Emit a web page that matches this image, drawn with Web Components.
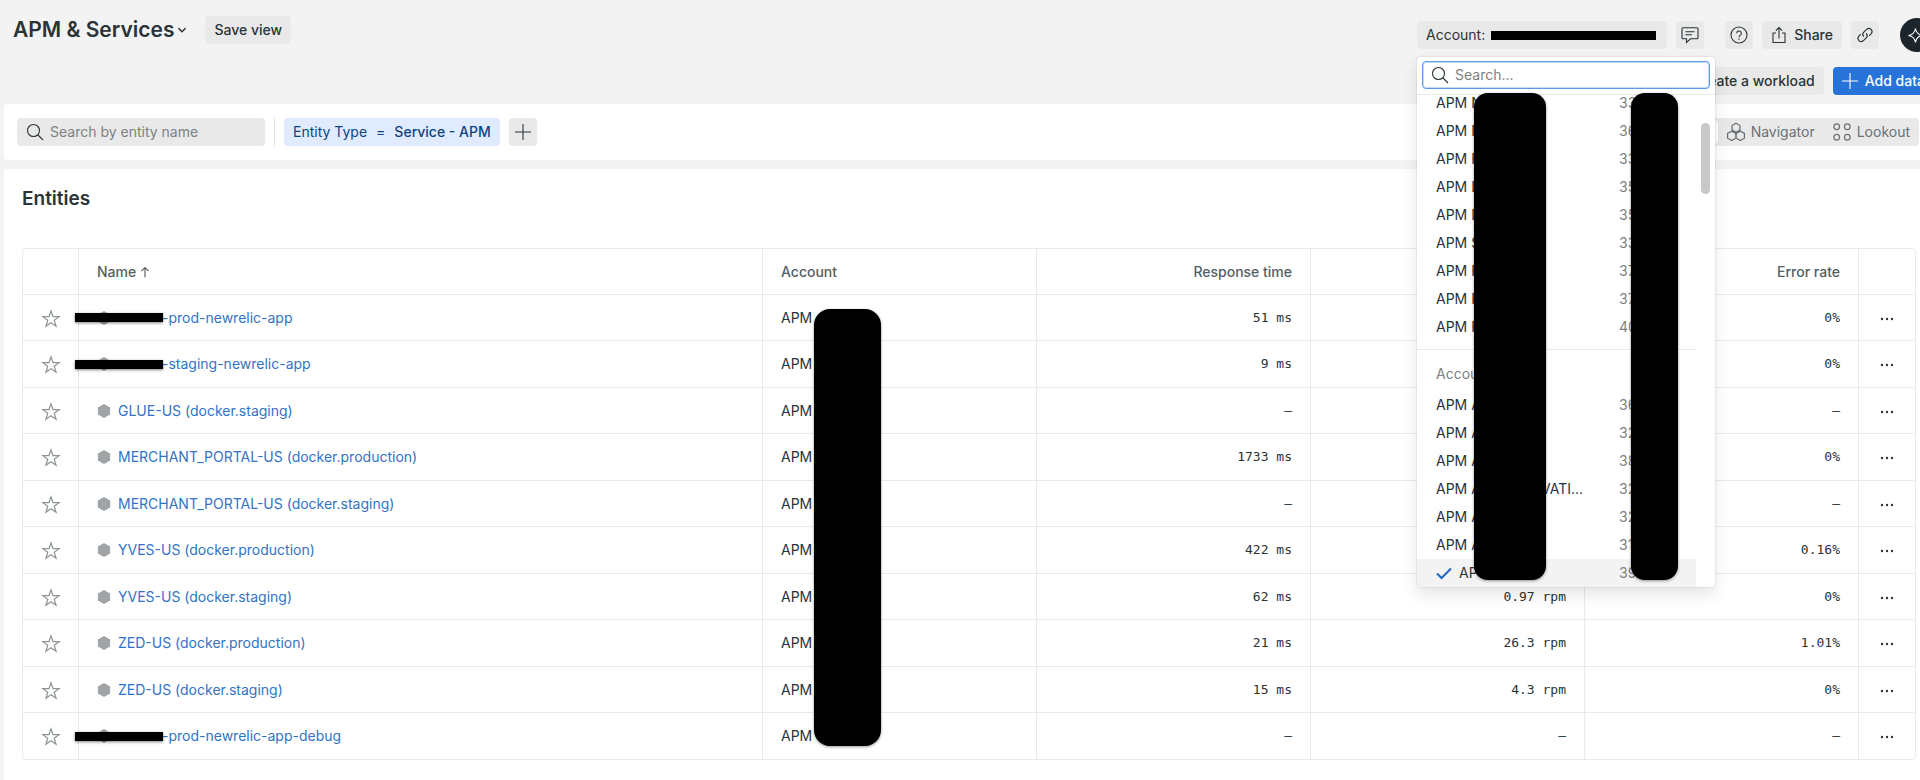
<!DOCTYPE html>
<html lang="en">
<head>
<meta charset="utf-8">
<meta name="viewport" content="width=device-width, initial-scale=1">
<title>APM &amp; Services</title>
<style>
    :root {
        --page-background: #f3f3f3;
        --control-background: #e9e9e9;
        --border-color: #e9eaea;
        --text-color: #293338;
        --muted-color: #6b7175;
        --link-color: #3273c5;
        --primary-color: #2873da;
    }
    * { box-sizing: border-box; }
    body {
        margin: 0;
        background: var(--page-background);
        color: var(--text-color);
        font: 14px/20px Inter, "Liberation Sans", sans-serif;
        overflow-x: hidden;
    }
</style>
</head>
<body>
<apm-app></apm-app>

<script>
const icons = {
    search: '<circle cx="6.5" cy="6.5" r="6"/><path d="M11 11l5 5"/>',
    plus: '<path d="M8 0v16M0 8h16"/>',
    chevron: '<path d="M4.5 6.2L8 9.8l3.5-3.6" stroke-width="1.4"/>',
    comment: '<path d="M1 0.8h14a1 1 0 0 1 1 1v9a1 1 0 0 1-1 1H8.5L4.5 15.5v-3.700h-3.500a1 1 0 0 1-1-1v-9a1 1 0 0 1 1-1z"/><path d="M3.500 4.700h9M3.500 7.700h6.500"/>',
    help: '<circle cx="8" cy="8" r="8"/><path d="M5.700 6.300a2.300 2.300 0 1 1 3.700 1.800C8.400 8.800 8 9.200 8 10.200"/><path d="M8 11.500v1.300" stroke-width="1.300"/>',
    share: '<path d="M5 6H2v9.500h12V6h-3M8 11.500V0.500M4.800 3.700L8 0.500l3.200 3.200"/>',
    link: '<path d="M6.800 9.700a3.200 3.200 0 0 1 0-4.500l3-3a3.200 3.200 0 0 1 4.500 4.500l-2.100 2.100"/><path d="M9.200 6.300a3.200 3.200 0 0 1 0 4.500l-3 3a3.200 3.200 0 0 1-4.500-4.500l2.100-2.100"/>',
    sparkle: '<path d="M6.500 1.500Q7.500 7.500 13.500 8.500 7.500 9.500 6.500 15.500 5.500 9.500 -0.500 8.500 5.500 7.500 6.500 1.500z"/><path d="M13 1v4M11 3h4"/>',
    list: '<path d="M1 3h14M1 8h14M1 13h14"/>',
    navigator: '<path d="M8 0.300l3.500 2v4L8 8.300 4.500 6.300v-4zM4.200 7.200l3.600 2v4.300l-3.600 2-3.700-2V9.200zM11.800 7.200l3.700 2v4.300l-3.700 2-3.600-2V9.200z"/>',
    lookout: '<circle cx="3.300" cy="3.300" r="2.500"/><circle cx="12.700" cy="3.300" r="2.500"/><circle cx="3.300" cy="12.700" r="2.500"/><circle cx="12.700" cy="12.700" r="2.500"/>',
    star: '<path d="M8 0.800l1.800 5.100h5.400l-4.300 3.300 1.600 5.300L8 11.300l-4.500 3.200 1.600-5.300L0.800 5.900h5.400z"/>',
    more: '<g fill="currentColor" stroke="none"><circle cx="3" cy="8" r="1.200"/><circle cx="8" cy="8" r="1.200"/><circle cx="13" cy="8" r="1.200"/></g>',
    check: '<path d="M1 8.500l4.500 4.500L15 3.500" stroke-width="2"/>',
    arrow: '<path d="M8 14V3M4 7l4-4 4 4" stroke-width="1.300"/>',
    hexagon: '<path d="M8 0l7 4v8l-7 4-7-4V4z" fill="currentColor" stroke="none"/>',
};

class NrIcon extends HTMLElement {
    constructor() {
        super();
        this.attachShadow({ mode: 'open' });
    }

    connectedCallback() {
        this.shadowRoot.innerHTML = `
            <style>
                :host {
                    display: inline-flex;
                    flex: none;
                    width: 16px;
                    height: 16px;
                }
                svg {
                    width: 100%;
                    height: 100%;
                    overflow: visible;
                }
            </style>
            <svg viewBox="0 0 16 16" fill="none" stroke="currentColor" stroke-width="1.1" aria-hidden="true">${icons[this.getAttribute('name')]}</svg>
        `;
    }
}

class NrButton extends HTMLElement {
    constructor() {
        super();
        this.attachShadow({ mode: 'open' });
    }

    connectedCallback() {
        const icon = this.getAttribute('icon');
        const label = this.getAttribute('label');

        this.shadowRoot.innerHTML = `
            <style>
                :host {
                    display: inline-flex;
                    flex: none;
                }
                button {
                    display: flex;
                    align-items: center;
                    justify-content: center;
                    gap: 7px;
                    height: 28px;
                    min-width: 28px;
                    padding: 0 9px;
                    border: 0;
                    border-radius: 4px;
                    background: var(--control-background);
                    color: var(--text-color);
                    font: inherit;
                    font-weight: 500;
                    white-space: nowrap;
                }
                :host([label]) button { padding: 0 6px; }
                :host([variant="primary"]) button {
                    background: var(--primary-color);
                    color: #fff;
                }
                :host([variant="tab"]) button {
                    gap: 6px;
                    background: transparent;
                    color: var(--muted-color);
                    font-weight: 400;
                }
                :host([variant="tab"]) nr-icon {
                    width: 18px;
                    height: 18px;
                }
                :host([variant="round"]) button {
                    width: 34px;
                    height: 34px;
                    border-radius: 50%;
                    background: #1d252c;
                    color: #fff;
                }
                :host([selected]) button {
                    height: 24px;
                    background: #fff;
                    color: var(--text-color);
                }
            </style>
            <button type="button" ${label ? `aria-label="${label}"` : ''}>
                ${icon ? `<nr-icon name="${icon}"></nr-icon>` : ''}
                <slot></slot>
            </button>
        `;
        if (label) this.shadowRoot.querySelector('slot').remove();
    }
}

class SearchField extends HTMLElement {
    constructor() {
        super();
        this.attachShadow({ mode: 'open' });
    }

    connectedCallback() {
        const placeholder = this.getAttribute('placeholder');

        this.shadowRoot.innerHTML = `
            <style>
                :host {
                    display: flex;
                    align-items: center;
                    gap: 7px;
                    height: 28px;
                    padding: 0 10px;
                    border-radius: 4px;
                    background: var(--control-background);
                    box-sizing: border-box;
                }
                :host([outlined]) {
                    padding: 0 9px;
                    background: #fff;
                    border: 1px solid #5a9be6;
                    box-shadow: inset 0 0 0 1px #c4dcf8;
                }
                input {
                    flex: 1;
                    min-width: 0;
                    padding: 0;
                    border: 0;
                    outline: 0;
                    background: transparent;
                    color: inherit;
                    font: inherit;
                }
                input::placeholder { color: #7c8184; opacity: 1; }
            </style>
            <nr-icon name="search"></nr-icon>
            <input type="text" aria-label="${placeholder}" placeholder="${placeholder}">
        `;
    }
}

// Account names and ids are masked, only their first characters are listed
const recentAccounts = [
    ['APM N', '33'], ['APM N', '36'], ['APM P', '33'], ['APM L', '35'], ['APM D', '35'],
    ['APM S', '33'], ['APM P', '37'], ['APM P', '37'], ['APM P', '40'],
];
const allAccounts = [
    ['APM A', '36'], ['APM A', '32'], ['APM A', '38'], ['APM A', '32', 'VATI...'],
    ['APM A', '32'], ['APM A', '31'],
];

class AccountPicker extends HTMLElement {
    constructor() {
        super();
        this.attachShadow({ mode: 'open' });
    }

    connectedCallback() {
        const item = ([name, id, tail]) => `
            <li><span class="name">${name}</span><span class="tail">${tail || ''}</span><span class="id">${id}</span></li>`;

        this.shadowRoot.innerHTML = `
            <style>
                * { box-sizing: border-box; }
                :host {
                    display: block;
                    position: relative;
                }
                .trigger {
                    display: flex;
                    align-items: center;
                    gap: 6px;
                    height: 28px;
                    padding: 0 11px 0 9px;
                    border: 0;
                    border-radius: 4px;
                    background: var(--control-background);
                    color: var(--text-color);
                    font: inherit;
                }
                .bar {
                    width: 165px;
                    height: 9px;
                    background: #000;
                }
                .menu {
                    position: absolute;
                    z-index: 2;
                    top: 36px;
                    left: 0;
                    width: 298px;
                    height: 530px;
                    display: flex;
                    flex-direction: column;
                    background: #fff;
                    border-radius: 4px;
                    box-shadow: 0 0 2px rgba(0, 0, 0, 0.2), 0 8px 16px rgba(0, 0, 0, 0.1);
                }
                .search {
                    padding: 4px 5px 5px;
                    border-bottom: 1px solid var(--border-color);
                }
                .body {
                    flex: 1;
                    min-height: 0;
                    display: flex;
                    overflow: hidden;
                    border-radius: 0 0 4px 4px;
                }
                .lists {
                    flex: 1;
                    margin-top: -6px;
                }
                ul {
                    margin: 0;
                    padding: 0;
                    list-style: none;
                }
                li {
                    display: grid;
                    grid-template-columns: 105px 78px 1fr;
                    align-items: center;
                    height: 28px;
                    padding-left: 19px;
                    line-height: 16px;
                }
                .id, h4 { color: #7c8184; }
                h4 {
                    margin: 8px 0 0;
                    padding: 14px 19px 7px;
                    border-top: 1px solid var(--border-color);
                    font-size: 14px;
                    font-weight: 400;
                    line-height: 20px;
                }
                li.selected { background: #f3f3f3; }
                .selected .name {
                    display: flex;
                    align-items: center;
                    gap: 7px;
                }
                .selected nr-icon { color: #1d66c4; }
                .track {
                    width: 19px;
                    padding: 28px 5px;
                }
                .thumb {
                    height: 71px;
                    border-radius: 5px;
                    background: #c8c8c8;
                }
                .mask {
                    position: absolute;
                    top: 36px;
                    height: 487px;
                    border-radius: 14px;
                    background: #000;
                    box-shadow: 0 1px 3px rgba(0, 0, 0, 0.4);
                }
                .mask.names { left: 57px; width: 72px; }
                .mask.ids { left: 214px; width: 47px; }
            </style>
            <button class="trigger" type="button" aria-haspopup="listbox" aria-expanded="true">Account: <span class="bar"></span></button>
            <div class="menu">
                <div class="search"><search-field outlined placeholder="Search..."></search-field></div>
                <div class="body">
                    <div class="lists">
                        <ul>${recentAccounts.map(item).join('')}</ul>
                        <h4>Accou</h4>
                        <ul>
                            ${allAccounts.map(item).join('')}
                            <li class="selected"><span class="name"><nr-icon name="check"></nr-icon>AP</span><span></span><span class="id">39</span></li>
                        </ul>
                    </div>
                    <div class="track"><div class="thumb"></div></div>
                </div>
                <div class="mask names"></div>
                <div class="mask ids"></div>
            </div>
        `;
    }
}

class AppHeader extends HTMLElement {
    constructor() {
        super();
        this.attachShadow({ mode: 'open' });
    }

    connectedCallback() {
        this.shadowRoot.innerHTML = `
            <style>
                :host {
                    display: flex;
                    justify-content: space-between;
                    align-items: flex-start;
                    padding: 16px 0 9px 9px;
                }
                .title, .row {
                    display: flex;
                    align-items: center;
                }
                h1 {
                    margin: 0;
                    font-size: 21px;
                    font-weight: 600;
                    line-height: 28px;
                }
                .title nr-button { margin-left: 15px; }
                .actions {
                    display: flex;
                    flex-direction: column;
                    align-items: flex-end;
                    gap: 15px;
                    padding-top: 2px;
                }
                .row { gap: 21px; }
                .group {
                    display: flex;
                    gap: 9px;
                }
            </style>
            <div class="title">
                <h1><slot></slot></h1>
                <nr-icon name="chevron"></nr-icon>
                <nr-button>Save view</nr-button>
            </div>
            <div class="actions">
                <div class="row">
                    <div class="group">
                        <account-picker></account-picker>
                        <nr-button icon="comment" label="Feedback"></nr-button>
                    </div>
                    <div class="group">
                        <nr-button icon="help" label="Help"></nr-button>
                        <nr-button icon="share">Share</nr-button>
                        <nr-button icon="link" label="Copy link"></nr-button>
                    </div>
                    <nr-button variant="round" icon="sparkle" label="Ask AI"></nr-button>
                </div>
                <div class="group">
                    <nr-button>Create a workload</nr-button>
                    <nr-button variant="primary" icon="plus">Add data</nr-button>
                </div>
            </div>
        `;
    }
}

class FilterBar extends HTMLElement {
    constructor() {
        super();
        this.attachShadow({ mode: 'open' });
    }

    connectedCallback() {
        this.shadowRoot.innerHTML = `
            <style>
                :host {
                    display: flex;
                    align-items: center;
                    justify-content: space-between;
                    padding: 14px 15px 14px 13px;
                    border-radius: 4px;
                    background: #fff;
                }
                .filters {
                    display: flex;
                    align-items: center;
                    gap: 9px;
                }
                search-field { width: 248px; }
                .divider {
                    width: 1px;
                    height: 28px;
                    background: #e3e4e4;
                }
                .chip {
                    display: flex;
                    align-items: center;
                    gap: 9px;
                    height: 28px;
                    padding: 0 9px;
                    border: 0;
                    border-radius: 4px;
                    background: #e1ebff;
                    color: #0c4480;
                    font: inherit;
                }
                .chip b { font-weight: 500; }
                .tabs {
                    display: flex;
                    align-items: center;
                    padding-left: 2px;
                    border-radius: 4px;
                    background: var(--control-background);
                }
            </style>
            <div class="filters">
                <search-field placeholder="Search by entity name"></search-field>
                <span class="divider"></span>
                <button class="chip" type="button"><span>Entity Type</span><span>=</span><b>Service - APM</b></button>
                <nr-button icon="plus" label="Add filter"></nr-button>
            </div>
            <div class="tabs">
                <nr-button variant="tab" selected icon="list">List</nr-button>
                <nr-button variant="tab" icon="navigator">Navigator</nr-button>
                <nr-button variant="tab" icon="lookout">Lookout</nr-button>
            </div>
        `;
    }
}

const entities = [
    { name: '-prod-newrelic-app', masked: true, response: '51 ms', throughput: '', errors: '0%' },
    { name: '-staging-newrelic-app', masked: true, response: '9 ms', throughput: '', errors: '0%' },
    { name: 'GLUE-US (docker.staging)', response: '–', throughput: '', errors: '–' },
    { name: 'MERCHANT_PORTAL-US (docker.production)', response: '1733 ms', throughput: '', errors: '0%' },
    { name: 'MERCHANT_PORTAL-US (docker.staging)', response: '–', throughput: '', errors: '–' },
    { name: 'YVES-US (docker.production)', response: '422 ms', throughput: '', errors: '0.16%' },
    { name: 'YVES-US (docker.staging)', response: '62 ms', throughput: '0.97 rpm', errors: '0%' },
    { name: 'ZED-US (docker.production)', response: '21 ms', throughput: '26.3 rpm', errors: '1.01%' },
    { name: 'ZED-US (docker.staging)', response: '15 ms', throughput: '4.3 rpm', errors: '0%' },
    { name: '-prod-newrelic-app-debug', masked: true, response: '–', throughput: '–', errors: '–' },
];

class EntityTable extends HTMLElement {
    constructor() {
        super();
        this.attachShadow({ mode: 'open' });
    }

    connectedCallback() {
        const row = (entity) => `
            <tr>
                <td class="icon"><button type="button" aria-label="Favorite"><nr-icon name="star"></nr-icon></button></td>
                <td>
                    <div class="entity">
                        <nr-icon name="hexagon"></nr-icon>
                        ${entity.masked ? '<span class="bar"></span>' : ''}
                        <a href="#" class="${entity.masked ? 'masked' : ''}">${entity.name}</a>
                    </div>
                </td>
                <td>APM</td>
                <td class="number">${entity.response}</td>
                <td class="number">${entity.throughput}</td>
                <td class="number">${entity.errors}</td>
                <td class="icon more"><button type="button" aria-label="More actions"><nr-icon name="more"></nr-icon></button></td>
            </tr>`;

        this.shadowRoot.innerHTML = `
            <style>
                * { box-sizing: border-box; }
                :host {
                    display: block;
                    position: relative;
                }
                table {
                    width: 100%;
                    table-layout: fixed;
                    border: 1px solid var(--border-color);
                    border-radius: 4px;
                    border-spacing: 0;
                }
                col { width: 274px; }
                col.icon { width: 56px; }
                col.name { width: auto; }
                th, td {
                    height: 46px;
                    padding: 0 18px;
                    border-right: 1px solid var(--border-color);
                    border-bottom: 1px solid var(--border-color);
                    text-align: left;
                    font-weight: 400;
                    white-space: nowrap;
                }
                tbody tr:nth-child(even):not(:last-child) td { height: 47px; }
                th {
                    color: #535e65;
                    font-weight: 500;
                }
                th:last-child, td:last-child { border-right: 0; }
                tbody tr:last-child td { border-bottom: 0; }
                th.number, td.number { text-align: right; }
                td.number { font-family: "DejaVu Sans Mono", "Liberation Mono", monospace; font-size: 13px; }
                td.icon {
                    padding: 0;
                    text-align: center;
                }
                td button {
                    display: inline-flex;
                    padding: 0;
                    border: 0;
                    background: none;
                    color: #8e9494;
                    vertical-align: middle;
                }
                td button nr-icon {
                    width: 18px;
                    height: 18px;
                }
                td.more nr-icon {
                    width: 16px;
                    height: 16px;
                }
                td.more button { color: var(--text-color); }
                .sort {
                    display: flex;
                    align-items: center;
                    gap: 2px;
                }
                .sort nr-icon { width: 14px; height: 14px; }
                .entity {
                    position: relative;
                    display: flex;
                    align-items: center;
                    gap: 7px;
                }
                .entity nr-icon {
                    width: 14px;
                    height: 14px;
                    color: #9fa5a7;
                }
                .bar {
                    position: absolute;
                    left: -22px;
                    width: 88px;
                    height: 9px;
                    background: #000;
                    box-shadow: 0 1px 3px rgba(0, 0, 0, 0.5);
                }
                a {
                    color: var(--link-color);
                    text-decoration: none;
                }
                a.masked { padding-left: 44px; }
                .mask {
                    position: absolute;
                    top: 61px;
                    bottom: 14px;
                    left: 792px;
                    width: 67px;
                    border-radius: 16px;
                    background: #000;
                    box-shadow: 0 1px 3px rgba(0, 0, 0, 0.4);
                }
            </style>
            <table>
                <colgroup>
                    <col class="icon"><col class="name"><col><col><col><col><col class="icon">
                </colgroup>
                <thead>
                    <tr>
                        <th></th>
                        <th aria-sort="ascending"><div class="sort">Name <nr-icon name="arrow"></nr-icon></div></th>
                        <th>Account</th>
                        <th class="number">Response time</th>
                        <th class="number"></th>
                        <th class="number">Error rate</th>
                        <th></th>
                    </tr>
                </thead>
                <tbody>${entities.map(row).join('')}</tbody>
            </table>
            <div class="mask"></div>
        `;
    }
}

class ApmApp extends HTMLElement {
    constructor() {
        super();
        this.attachShadow({ mode: 'open' });
    }

    connectedCallback() {
        this.shadowRoot.innerHTML = `
            <style>
                :host {
                    display: flex;
                    flex-direction: column;
                    min-height: 100vh;
                    margin: 0 -14px 0 4px;
                }
                main {
                    flex: 1;
                    margin-top: 9px;
                    padding: 18px 18px 20px;
                    border-radius: 4px 4px 0 0;
                    background: #fff;
                }
                h2 {
                    margin: 0 0 37px;
                    font-size: 19px;
                    font-weight: 600;
                    line-height: 24px;
                }
            </style>
            <app-header>APM &amp; Services</app-header>
            <filter-bar></filter-bar>
            <main>
                <h2>Entities</h2>
                <entity-table></entity-table>
            </main>
        `;
    }
}

customElements.define('nr-icon', NrIcon);
customElements.define('nr-button', NrButton);
customElements.define('search-field', SearchField);
customElements.define('account-picker', AccountPicker);
customElements.define('app-header', AppHeader);
customElements.define('filter-bar', FilterBar);
customElements.define('entity-table', EntityTable);
customElements.define('apm-app', ApmApp);
</script>
</body>
</html>
